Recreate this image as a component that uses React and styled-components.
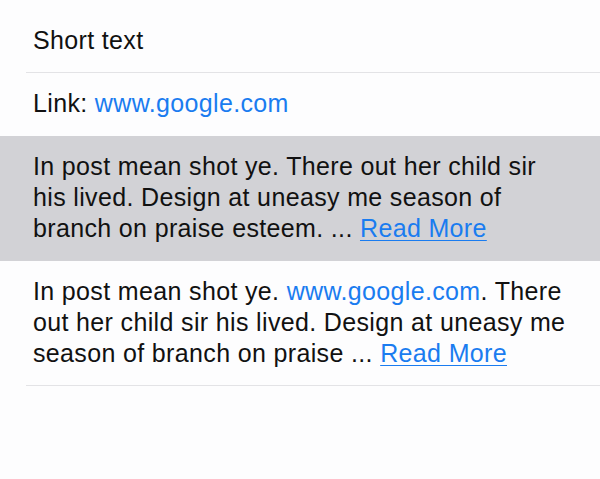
import React from 'react';
import styled, { createGlobalStyle } from 'styled-components';

const GlobalStyle = createGlobalStyle`
  html, body {
    margin: 0;
    padding: 0;
    background: #fdfdfe;
  }
  body {
    font-family: "Liberation Sans", Arial, sans-serif;
  }
`;

const List = styled.div`
  width: 600px;
  padding-top: 10px;
  background: #fdfdfe;
`;

const Cell = styled.div`
  position: relative;
  padding: 15px 20px 17px 33px;
  background: ${props => (props.selected ? '#d2d2d6' : 'transparent')};
  color: #111;
  font-size: 25px;
  letter-spacing: 0.35px;
  line-height: 31px;
  white-space: nowrap;

  &::after {
    content: '';
    display: ${props => (props.separator ? 'block' : 'none')};
    position: absolute;
    left: 26px;
    right: 0;
    bottom: 0;
    height: 1px;
    background: #e3e3e6;
  }
`;

const Link = styled.a`
  color: #1a7cf0;
  text-decoration: none;
`;

const ReadMore = styled.a`
  color: #1a7cf0;
  text-decoration: underline;
  text-underline-offset: 3px;
  text-decoration-thickness: 1px;
`;

export default function App() {
  return (
    <>
      <GlobalStyle />
      <List>
        <Cell separator>Short text</Cell>
        <Cell>
          Link: <Link>www.google.com</Link>
        </Cell>
        <Cell selected>
          In post mean shot ye. There out her child sir
          <br />
          his lived. Design at uneasy me season of
          <br />
          branch on praise esteem. ... <ReadMore>Read More</ReadMore>
        </Cell>
        <Cell separator>
          In post mean shot ye. <Link>www.google.com</Link>. There
          <br />
          out her child sir his lived. Design at uneasy me
          <br />
          season of branch on praise ... <ReadMore>Read More</ReadMore>
        </Cell>
      </List>
    </>
  );
}
